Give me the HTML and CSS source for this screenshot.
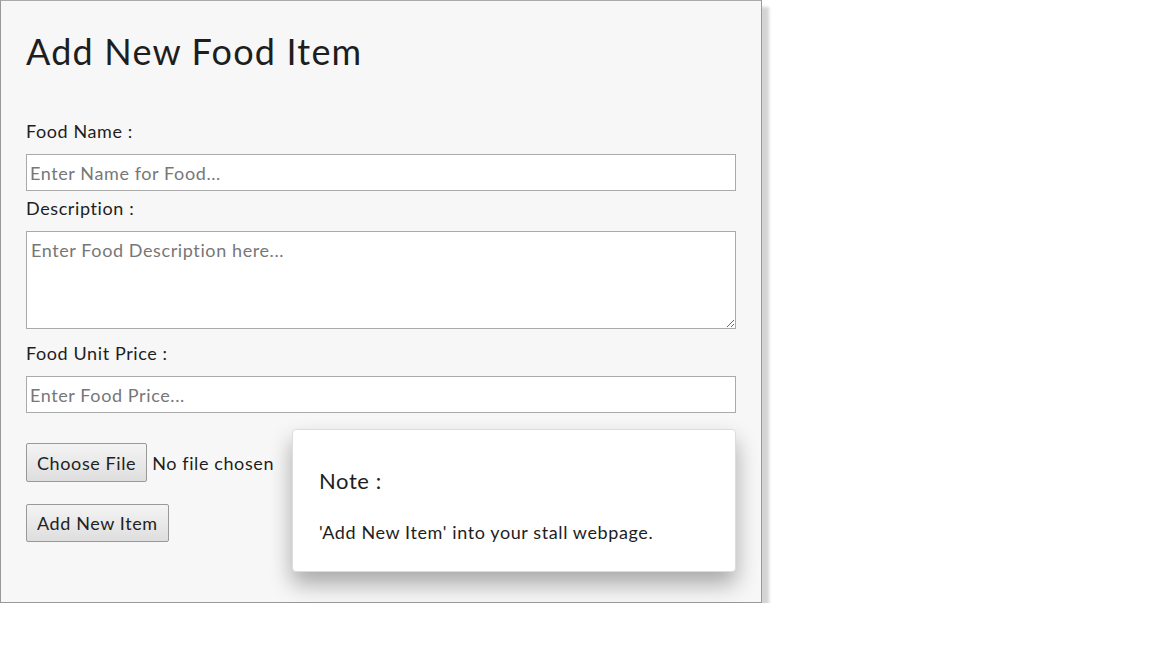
FILE: index.html
```html
<!DOCTYPE html>
<html>
<head>
<meta charset="utf-8">
<link rel="stylesheet" href="styles.css">
</head>
<body>
<div class="panel">
  <h1 class="title">Add New Food Item</h1>
  <form class="form">
    <label class="label label-first">Food Name :</label>
    <input class="field" type="text" placeholder="Enter Name for Food...">
    <label class="label label-tight">Description :</label>
    <textarea class="field area" placeholder="Enter Food Description here..."></textarea>
    <label class="label">Food Unit Price :</label>
    <input class="field" type="text" placeholder="Enter Food Price...">
    <div class="file-row">
      <button type="button" class="btn">Choose File</button>
      <span class="file-text">No file chosen</span>
    </div>
    <button type="button" class="btn submit">Add New Item</button>
  </form>
  <div class="note">
    <h2 class="note-title">Note :</h2>
    <p class="note-text">'Add New Item' into your stall webpage.</p>
  </div>
</div>
</body>
</html>
```

FILE: styles.css
```css
html, body {
  margin: 0;
  padding: 0;
  background: #fff;
}
body {
  font-family: "Lato", "Open Sans", sans-serif;
  color: #1e1e1e;
  letter-spacing: 0.6px;
}
.panel {
  position: relative;
  width: 710px;
  padding: 29px 25px 60px;
  background: #f7f7f7;
  border: 1px solid #999;
  border-top-color: #aaa;
  box-shadow: 7px 7px 3px #d4d4d4;
}
.title {
  margin: 0;
  font-size: 36px;
  font-weight: 400;
  line-height: 43px;
  letter-spacing: 1.2px;
}
.form {
  display: flex;
  flex-direction: column;
  align-items: flex-start;
}
.label {
  display: block;
  font-size: 18px;
  line-height: 22px;
  margin: 13px 0 12px;
}
.label-first { margin-top: 47px; }
.label-tight { margin-top: 6px; }
.field {
  box-sizing: border-box;
  width: 710px;
  height: 37px;
  margin: 0;
  padding: 1px 3px 0;
  border: 1px solid #aaa;
  background: #fff;
  font-family: inherit;
  font-size: 18px;
  letter-spacing: 0.6px;
  color: #222;
}
.field::placeholder { color: #777; }
.area {
  height: 98px;
  padding: 7px 4px;
  resize: vertical;
}
.file-row {
  display: flex;
  align-items: center;
  gap: 5px;
  margin-top: 30px;
}
.btn {
  box-sizing: border-box;
  height: 39px;
  padding: 0 10px;
  border: 1px solid #999;
  border-radius: 2px;
  background: linear-gradient(#f4f4f4, #dedede);
  font-family: inherit;
  font-size: 18px;
  letter-spacing: 0.6px;
  color: #222;
}
.file-text { font-size: 18px; }
.submit {
  margin-top: 22px;
  height: 38px;
}
.note {
  position: absolute;
  right: 25px;
  bottom: 30px;
  width: 444px;
  height: 143px;
  box-sizing: border-box;
  padding: 37px 26px 0;
  background: #fff;
  border-radius: 4px;
  border: 1px solid #ddd;
  box-shadow: 0 12px 22px rgba(0,0,0,0.32);
}
.note-title {
  margin: 0;
  font-size: 22px;
  font-weight: 400;
  line-height: 28px;
}
.note-text {
  margin: 26px 0 0;
  font-size: 18px;
  line-height: 22px;
}
```
